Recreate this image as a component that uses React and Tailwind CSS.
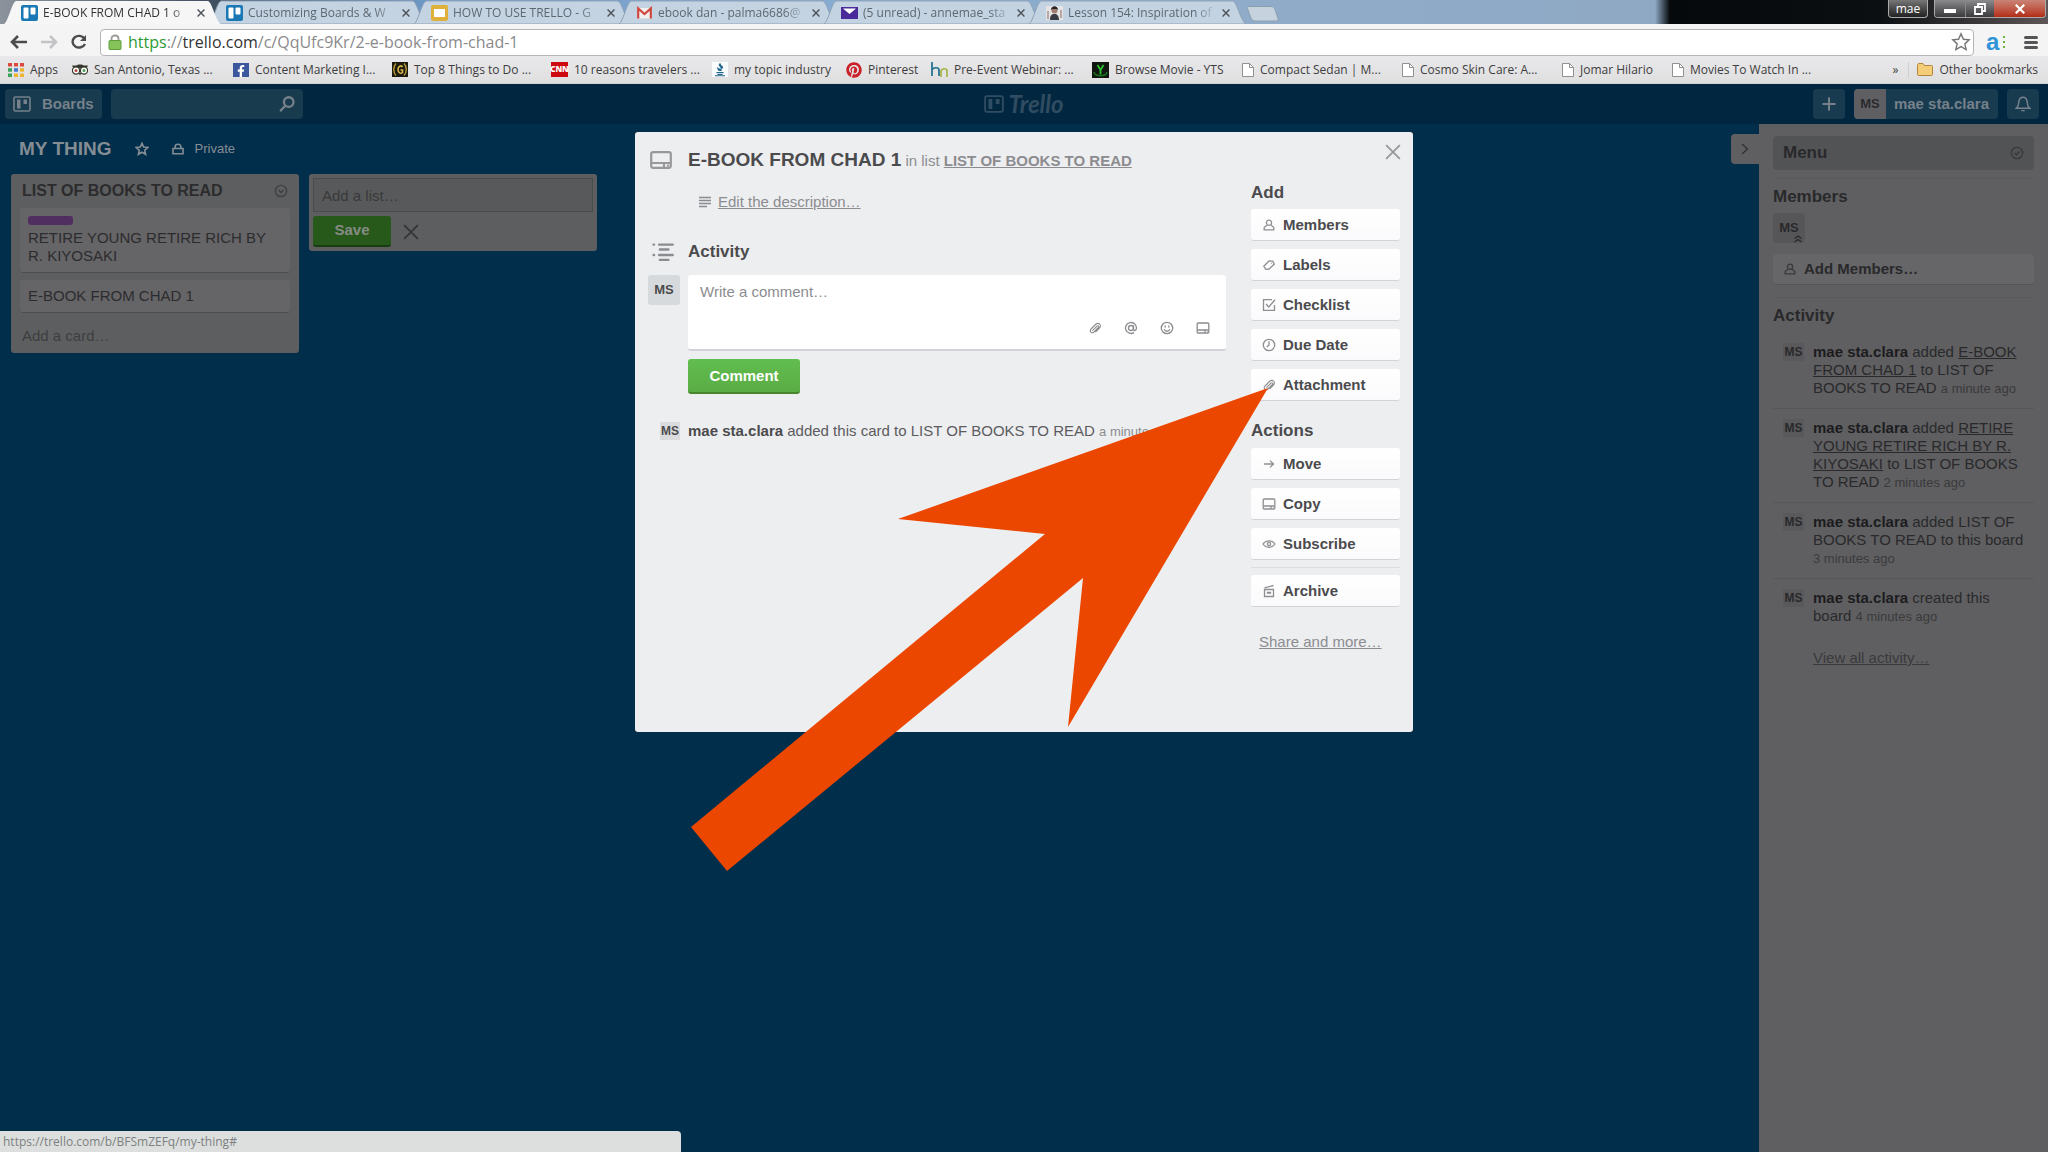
import { FaFacebookF, FaPinterest } from "react-icons/fa";

const tabs = [
  { title: "E-BOOK FROM CHAD 1 o", icon: "trello", active: true },
  { title: "Customizing Boards & W", icon: "trello" },
  { title: "HOW TO USE TRELLO - G", icon: "slides" },
  { title: "ebook dan - palma6686@", icon: "gmail" },
  { title: "(5 unread) - annemae_sta", icon: "yahoo" },
  { title: "Lesson 154: Inspiration of", icon: "photo" },
];

const bookmarks = [
  { title: "Apps", icon: "apps", width: "w-16" },
  { title: "San Antonio, Texas ...", icon: "owl", width: "w-[161px]" },
  { title: "Content Marketing I...", icon: "facebook", width: "w-[159px]" },
  { title: "Top 8 Things to Do ...", icon: "gold", width: "w-[159px]" },
  { title: "10 reasons travelers ...", icon: "cnn", width: "w-[161px]" },
  { title: "my topic industry", icon: "bbb", width: "w-[134px]" },
  { title: "Pinterest", icon: "pinterest", width: "w-[85px]" },
  { title: "Pre-Event Webinar: ...", icon: "hn", width: "w-[161px]" },
  { title: "Browse Movie - YTS", icon: "yts", width: "w-[150px]" },
  { title: "Compact Sedan | M...", icon: "page", width: "w-40" },
  { title: "Cosmo Skin Care: A...", icon: "page", width: "w-40" },
  { title: "Jomar Hilario", icon: "page", width: "w-[110px]" },
  { title: "Movies To Watch In ...", icon: "page", width: "w-40" },
];

const addButtons = [
  { label: "Members", icon: "member" },
  { label: "Labels", icon: "label" },
  { label: "Checklist", icon: "check" },
  { label: "Due Date", icon: "clock" },
  { label: "Attachment", icon: "clip" },
];

const actionButtons = [
  { label: "Move", icon: "move" },
  { label: "Copy", icon: "card" },
  { label: "Subscribe", icon: "eye" },
];

function Favicon({ name }) {
  switch (name) {
    case "trello":
      return (
        <svg viewBox="0 0 17 16" className="h-4 w-[17px] shrink-0">
          <rect width="17" height="16" rx="2" fill="#1a78b4" />
          <rect x="2.5" y="2.5" width="5" height="11" rx="1" fill="#fff" />
          <rect x="9.5" y="2.5" width="5" height="7" rx="1" fill="#fff" />
        </svg>
      );
    case "slides":
      return (
        <svg viewBox="0 0 17 16" className="h-4 w-[17px] shrink-0">
          <rect width="17" height="16" rx="2" fill="#dfb13a" />
          <rect x="3" y="4" width="11" height="8" fill="#fff" />
        </svg>
      );
    case "gmail":
      return (
        <svg viewBox="0 0 17 16" className="h-4 w-[17px] shrink-0">
          <path d="M2 3h13v10.500H2z" fill="#f1efef" />
          <path d="M2.200 13.500V3.500l6.300 5.500 6.300-5.500v10" fill="none" stroke="#d2473d" strokeWidth="2.200" />
        </svg>
      );
    case "yahoo":
      return (
        <svg viewBox="0 0 17 16" className="h-4 w-[17px] shrink-0">
          <path d="M0 2h17v12H0z" fill="#4a2a9b" />
          <path d="M2 3.500h13L8.500 9z" fill="#fff" />
        </svg>
      );
    case "photo":
      return (
        <svg viewBox="0 0 17 16" className="h-4 w-[17px] shrink-0">
          <path d="M0 1h17v14H0z" fill="#e4e4e6" />
          <path d="M1 6h2v8H1zM14 5h2v8h-2z" fill="#b9a7a4" />
          <path d="M4 15c0-4 1-5 3-6h3c2 1 3 3 3 6z" fill="#3a3a42" />
          <circle cx="8.500" cy="5.500" r="3" fill="#a07c70" />
          <path d="M5 5c0-5 7-5 7 0L10.500 4h-4z" fill="#272326" />
        </svg>
      );
    case "apps":
      return (
        <svg viewBox="0 0 16 14" className="h-[14px] w-4 shrink-0">
          <path d="M0 0h4v3.500H0zM6 0h4v3.500H6zM12 0h4v3.500h-4z" fill="#d94a3d" />
          <path d="M0 5.200h4v3.500H0z" fill="#3ba25b" />
          <path d="M6 5.200h4v3.500H6z" fill="#4678d0" />
          <path d="M12 5.200h4v3.500h-4z" fill="#ecb430" />
          <path d="M0 10.500h4V14H0z" fill="#3ba25b" />
          <path d="M6 10.500h4V14H6zM12 10.500h4V14h-4z" fill="#ecb430" />
        </svg>
      );
    case "owl":
      return (
        <svg viewBox="0 0 16 12" className="h-3 w-4 shrink-0">
          <path d="M0 1.500h4c2-1.500 6-1.500 8 0h4l-1.500 2.500H1.500z" fill="#35382c" />
          <circle cx="4" cy="6.500" r="3.600" fill="#fff" stroke="#35382c" strokeWidth="1.200" />
          <circle cx="12" cy="6.500" r="3.600" fill="#fff" stroke="#35382c" strokeWidth="1.200" />
          <circle cx="4" cy="6.500" r="1.500" fill="#b8463c" />
          <circle cx="12" cy="6.500" r="1.500" fill="#4b9a55" />
          <path d="M6.500 9h3L8 11.500z" fill="#35382c" />
        </svg>
      );
    case "facebook":
      return (
        <span className="flex h-[14px] w-4 shrink-0 items-end justify-end bg-[#3b579d] pr-0.5 text-white">
          <FaFacebookF size={12} />
        </span>
      );
    case "gold":
      return (
        <svg viewBox="0 0 16 15" className="h-[15px] w-4 shrink-0">
          <path d="M0 0h16v15H0z" fill="#1d1a10" />
          <path d="M4 1.500c-3 3-3 9 0 12M12 1.500c3 3 3 9 0 12" fill="none" stroke="#b99a3c" strokeWidth="1.400" />
          <path d="M10.500 5C9 3 6 4 6 7.500s3 4.500 4.500 3V8H8.500" fill="none" stroke="#d9b74c" strokeWidth="1.600" />
        </svg>
      );
    case "cnn":
      return (
        <span className="flex h-[15px] w-[17px] shrink-0 items-center justify-center bg-[#cc0a10] text-[8px] font-black text-white">
          CNN
        </span>
      );
    case "bbb":
      return (
        <svg viewBox="0 0 16 15" className="h-[15px] w-4 shrink-0">
          <path d="M0 0h16v15H0z" fill="#fbfcfd" />
          <path d="M8 1c-4 3 3 4 0 7 5-2 3-4 1-5 0-1 0-1-1-2zM5.500 5c-1 2 1 3 1 4h3C11 7 7 7 5.500 5z" fill="#22688f" />
          <path d="M4.500 10h7v1.200h-7zM5.500 12h5v1h-5zM3 13.300h10v1H3z" fill="#22688f" />
        </svg>
      );
    case "pinterest":
      return <FaPinterest size={16} className="shrink-0 text-[#cb2027]" />;
    case "hn":
      return (
        <svg viewBox="0 0 17 16" className="h-4 w-[17px] shrink-0" fill="none" strokeWidth="1.700">
          <path d="M1 0v14M1 8c1-3 7-3 7 0v6" stroke="#1f6f8f" />
          <path d="M10 15V9c1-3 6-3 6 0v6" stroke="#a4b545" />
        </svg>
      );
    case "yts":
      return (
        <svg viewBox="0 0 17 16" className="h-4 w-[17px] shrink-0">
          <path d="M0 0h17v16H0z" fill="#10160f" />
          <path d="M2 10c1 5 12 5 13 0" fill="none" stroke="#177018" strokeWidth="1.500" />
          <path d="M5.500 3l3 5v4.500M11.500 3l-3 5" fill="none" stroke="#2bc42e" strokeWidth="1.800" />
        </svg>
      );
    default:
      return (
        <svg viewBox="0 0 12 14" className="h-[14px] w-3 shrink-0">
          <path d="M.5.5h7l4 4v9H.5z" fill="#fff" stroke="#909090" />
          <path d="M7.500.5v4h4" fill="none" stroke="#909090" />
        </svg>
      );
  }
}

function Icon({ name, className }) {
  const shapes = {
    member: (
      <>
        <circle cx="7" cy="4.800" r="2.600" />
        <path d="M4.800 7.200 2.200 9.500v2.300h9.600V9.500L9.200 7.200" />
      </>
    ),
    label: (
      <>
        <path d="M1.800 8.200 7 3l3.800.2L12.300 6l-5.200 5-3.300.3z" />
        <path d="M9.300 5.300h.8" />
      </>
    ),
    check: (
      <>
        <path d="M12.500 7v5.300h-11V1.700h8.500" />
        <path d="m4 6 2.700 3L13 1.800" />
      </>
    ),
    clock: (
      <>
        <circle cx="7" cy="7" r="5.700" />
        <path d="M7 3.200V7L4.800 9" />
      </>
    ),
    clip: (
      <path
        d="m4.400 9.600 4.600-4.400c1.200-1.100 2.400.2 1.400 1.300L6 11c-2.200 2-5-.8-3-3l4.500-4.500c3-2.800 6.600.8 4 3.500l-4 4"
        strokeWidth="1.100"
      />
    ),
    card: (
      <>
        <rect x="1.200" y="2" width="11.600" height="10" rx="1" />
        <path d="M1.500 9h11M9 9v2.500M11 10.700h.5" />
      </>
    ),
    move: <path d="M2 7h9.500M8 3.600 11.500 7 8 10.400" />,
    eye: (
      <>
        <path d="M1 7c2.800-4.300 9.200-4.300 12 0-2.800 4.300-9.200 4.300-12 0z" />
        <circle cx="7" cy="7" r="1.600" />
      </>
    ),
    archive: <path d="M2.500 5.500h9v7h-9zM2.500 3.800l9-2.300M5.500 8.300h3v.8h-3z" />,
    at: (
      <>
        <circle cx="7" cy="7" r="2.500" />
        <path d="M9.500 4.500v4c.5 1.800 3 1 3-1.500A5.500 5.500 0 1 0 10 11.600" />
      </>
    ),
    smile: (
      <>
        <circle cx="7" cy="7" r="5.700" />
        <path d="M5.200 4.500v2M8.800 4.500v2M4.200 8.300c1 2.600 4.600 2.600 5.600 0" />
      </>
    ),
    star: <path d="m7 1.300 1.700 3.800 4 .4-3 2.800.9 4L7 10.200l-3.600 2.100.9-4-3-2.800 4-.4z" />,
    lock: (
      <>
        <path d="M2 6.500h10v5.300H2z" />
        <path d="M4.200 6.300V4.500c0-3 5.600-3 5.600 0v1.800" />
      </>
    ),
    circleDown: (
      <>
        <circle cx="7" cy="7" r="5.700" />
        <path d="m4.500 6 2.500 2.500L9.500 6" />
      </>
    ),
    circleCheck: (
      <>
        <circle cx="7" cy="7" r="5.700" />
        <path d="m4.500 6.800 2 2 3.200-3.300" />
      </>
    ),
    close: <path d="m1 1 12 12M13 1 1 13" />,
    search: (
      <>
        <circle cx="8.500" cy="5.300" r="4.200" />
        <path d="M5.500 8.500 1 13.200" strokeWidth="2" />
      </>
    ),
    plus: <path d="M7 .5v13M.5 7h13" />,
    bell: (
      <path d="M1 10.800c2.300-1.500 2-3.200 2.300-5.600C3.800 2 5.300 1 7 1s3.200 1 3.700 4.200c.3 2.400 0 4.100 2.300 5.600zM5.500 12.800h3" />
    ),
    right: <path d="m4 2 5.500 5L4 12" />,
    lines: <path d="M1 2.500h12M1 5.500h12M1 8.500h12M1 11.500h8" />,
    activity: (
      <path
        d="M1 2.300h.3M4.500 2.300h8.700M5 5.400h5.500M1 8.900h.3M4.500 8.900h8.700M5 12h5.500"
        strokeWidth="1.500"
        strokeLinecap="round"
      />
    ),
  };
  return (
    <svg viewBox="0 0 14 14" fill="none" stroke="currentColor" strokeWidth="1.300" className={className} aria-hidden="true">
      {shapes[name]}
    </svg>
  );
}

function BoardsMark({ className }) {
  return (
    <svg viewBox="0 0 18 16" className={className} fill="none" stroke="currentColor" strokeWidth="1.600">
      <rect x="1" y="1" width="16" height="14" rx="1.500" />
      <path d="M4 3.500h3.500v9H4zM10.500 3.500H14V8h-3.500z" fill="currentColor" stroke="none" />
    </svg>
  );
}

function Tab({ title, icon, active }) {
  return (
    <div className={"relative flex h-6 w-[205px] items-center gap-[5px] pt-0.5 pl-[17px] " + (active ? "z-10" : "")}>
      <svg viewBox="0 0 217 24" preserveAspectRatio="none" className="absolute top-0 left-0 h-6 w-[217px]">
        <path
          d="M0 24C4 22 8 2 12 1h192c4 1 8 21 13 23z"
          fill={active ? "#f6f6f7" : "#c3d3e2"}
          stroke={active ? "none" : "#8fa3b6"}
        />
      </svg>
      <span className="relative">
        <Favicon name={icon} />
      </span>
      <span
        className={
          "relative w-[149px] text-xs whitespace-nowrap [mask-image:linear-gradient(to_right,black_85%,transparent)] " +
          (active ? "text-[#333]" : "text-[#5d6771]")
        }
      >
        {title}
      </span>
      <button type="button" aria-label="Close tab" className="relative text-[#4d5258]">
        <Icon name="close" className="size-2 stroke-[2.5]" />
      </button>
    </div>
  );
}

function Browser() {
  return (
    <header className="font-['Open_Sans',sans-serif]">
      <div className="flex h-6 items-stretch bg-[linear-gradient(to_right,#8b929b_0px,#3c4d5e_225px,#6f9ac8_430px,#86abd2_800px,#8facca_1200px,#8fa9c4_1655px,#05090b_1670px,#0b0f11_1880px,#5d5557_2048px)] pl-1">
        {tabs.map((tab) => (
          <Tab key={tab.title} {...tab} />
        ))}
        <button type="button" aria-label="New tab" className="mt-1.5 ml-3 h-4">
          <svg viewBox="0 0 34 16" className="h-4 w-[34px]">
            <path d="M3 .5h22c2 0 3 1 4 3l3 9c.5 2-.5 2.500-2 2.500H9c-2 0-3-1-4-3L1.500 2.500C1 1 1.500.5 3 .5z" fill="#c6d3de" stroke="#8da0b3" />
          </svg>
        </button>
        <div className="ml-auto flex gap-1.5 pr-0.5 text-white">
          <button type="button" className="h-[18px] w-10 rounded-b border border-t-0 border-[#aaa] bg-gradient-to-b from-[#777] to-[#222] text-xs leading-4">
            mae
          </button>
          <div className="flex h-[18px] overflow-hidden rounded-b border border-t-0 border-[#aaa]">
            <button type="button" aria-label="Minimize" className="flex w-[31px] items-center justify-center border-r border-[#888] bg-gradient-to-b from-[#8b8b8d] to-[#3b3b3d]">
              <span className="mt-1 h-1 w-3 bg-white" />
            </button>
            <button type="button" aria-label="Restore" className="flex w-7 items-center justify-center bg-gradient-to-b from-[#8b8b8d] to-[#3b3b3d]">
              <svg viewBox="0 0 12 12" className="size-3" fill="none" stroke="#fff" strokeWidth="1.800">
                <path d="M4 3V1h7v7H9M1 4h7v7H1z" />
              </svg>
            </button>
            <button type="button" aria-label="Close" className="flex w-[51px] items-center justify-center bg-gradient-to-b from-[#c98376] to-[#b32a13]">
              <Icon name="close" className="size-2.5 stroke-[3]" />
            </button>
          </div>
        </div>
      </div>

      <div className="flex h-8 items-center bg-[#f4f4f5] pt-1 pr-2.5 pl-2.5">
        <button type="button" aria-label="Back" className="text-[#4c4c4e]">
          <svg viewBox="0 0 18 14" className="h-[14px] w-[18px]" fill="none" stroke="currentColor" strokeWidth="2.600">
            <path d="M17 7H2M8 1 2 7l6 6" />
          </svg>
        </button>
        <button type="button" aria-label="Forward" className="ml-3 text-[#c4c4c6]">
          <svg viewBox="0 0 18 14" className="h-[14px] w-[18px]" fill="none" stroke="currentColor" strokeWidth="2.600">
            <path d="M1 7h15M10 1l6 6-6 6" />
          </svg>
        </button>
        <button type="button" aria-label="Reload" className="ml-3 text-[#4c4c4e]">
          <svg viewBox="0 0 18 16" className="h-4 w-[18px]" fill="none" stroke="currentColor" strokeWidth="2.400">
            <path d="M14.500 4.500A6.500 5.800 0 1 0 15 10" />
            <path d="M16 1v6h-6z" fill="currentColor" stroke="none" />
          </svg>
        </button>
        <div className="ml-3 flex h-[27px] flex-1 items-center rounded-sm border border-[#b5b5b8] bg-white pr-0.5 pl-[7px]">
          <svg viewBox="0 0 14 16" className="h-4 w-[14px]">
            <path d="M3.500 7V4.500c0-4 7-4 7 0V7" fill="none" stroke="#9a9d98" strokeWidth="1.800" />
            <rect x="1" y="6.500" width="12" height="9" rx="1" fill="#86c35a" stroke="#5f9d3c" />
          </svg>
          <p className="ml-1.5 flex-1 text-base leading-6 text-[#8a8a8c]">
            <span className="text-[#2c9a32]">https</span>://<span className="text-[#333]">trello.com</span>
            /c/QqUfc9Kr/2-e-book-from-chad-1
          </p>
          <button type="button" aria-label="Bookmark this page" className="text-[#77777a]">
            <Icon name="star" className="size-5 stroke-1" />
          </button>
        </div>
        <div className="ml-3 flex w-5 items-center gap-1">
          <span className="font-['Liberation_Sans',sans-serif] text-2xl leading-6 font-bold text-[#2f93d8]">a</span>
          <svg viewBox="0 0 2 14" className="h-[14px] w-0.5 shrink-0 fill-[#70b33c]">
            <path d="M0 1h2v2H0zM0 6h2v2H0zM0 11h2v2H0z" />
          </svg>
        </div>
        <button type="button" aria-label="Browser menu" className="ml-[18px] flex flex-col gap-0.5">
          <span className="h-[3px] w-[14px] rounded-sm bg-[#555557]" />
          <span className="h-[3px] w-[14px] rounded-sm bg-[#555557]" />
          <span className="h-[3px] w-[14px] rounded-sm bg-[#555557]" />
        </button>
      </div>

      <nav className="flex h-7 items-center overflow-hidden border-b border-[#d0d2d3] bg-gradient-to-b from-[#e9e8ea] to-[#dfdfe0] pr-2.5 pl-2 text-xs text-[#3d3d40]">
        {bookmarks.map(({ title, icon, width }) => (
          <a key={title} href="#" className={"flex shrink-0 items-center gap-1.5 whitespace-nowrap " + width}>
            <Favicon name={icon} />
            {title}
          </a>
        ))}
        <button type="button" aria-label="More bookmarks" className="ml-auto">»</button>
        <a href="#" className="ml-2.5 flex items-center gap-1.5 border-l border-[#cfcfd1] pl-2 whitespace-nowrap">
          <svg viewBox="0 0 16 13" className="h-[13px] w-4">
            <path d="M.5 2.500c0-1 .5-2 1.500-2h4l1.500 2h7c.7 0 1 .3 1 1v8c0 .7-.3 1-1 1h-13c-.7 0-1-.3-1-1z" fill="#f3cd78" stroke="#b28440" />
          </svg>
          Other bookmarks
        </a>
      </nav>
    </header>
  );
}

function TrelloBar() {
  return (
    <div className="relative flex h-10 items-center bg-[#012740] px-[5px] text-[15px] font-bold text-[#76818b]">
      <button type="button" className="flex h-[30px] w-[97px] items-center gap-[11px] rounded bg-[#183b50] pl-2">
        <BoardsMark className="h-4 w-[18px]" />
        Boards
      </button>
      <label className="ml-[9px] flex h-[30px] w-48 items-center rounded bg-[#183b4d] pr-2">
        <input aria-label="Search" className="min-w-0 flex-1 bg-transparent px-2 outline-none" />
        <Icon name="search" className="size-4 stroke-2" />
      </label>
      <div className="absolute inset-x-0 flex items-center justify-center gap-1 text-[#304c61]">
        <BoardsMark className="h-[18px] w-5" />
        <span className="font-['Lato',sans-serif] text-2xl leading-6 font-bold italic">Trello</span>
      </div>
      <button type="button" aria-label="Create" className="relative ml-auto flex h-[30px] w-8 items-center justify-center rounded bg-[#183b50]">
        <Icon name="plus" className="size-[14px] stroke-2" />
      </button>
      <button type="button" className="relative ml-[9px] flex h-[30px] items-center overflow-hidden rounded bg-[#183b50] pr-[9px]">
        <span className="mr-2 flex h-full w-8 items-center justify-center bg-[#5f5f63] text-[13px] text-[#2b2b2e]">MS</span>
        mae sta.clara
      </button>
      <button type="button" aria-label="Notifications" className="relative mr-1 ml-[9px] flex h-[30px] w-8 items-center justify-center rounded bg-[#183b50]">
        <Icon name="bell" className="size-4" />
      </button>
    </div>
  );
}

function Board() {
  return (
    <main className="flex-1 px-[11px]">
      <div className="flex h-[50px] items-center pl-2 text-[#858d94]">
        <h1 className="text-[19px] font-bold">MY THING</h1>
        <button type="button" aria-label="Star board" className="ml-[23px]">
          <Icon name="star" className="size-[14px] stroke-[1.6]" />
        </button>
        <button type="button" className="ml-[22px] flex items-center gap-2.5 text-[13px]">
          <Icon name="lock" className="size-[14px] stroke-[1.6]" />
          Private
        </button>
      </div>
      <div className="flex items-start gap-2.5">
        <section className="w-72 rounded-[3px] bg-[#5d5e5f] px-[9px] pb-2 text-[15px] leading-[18px] text-[#2c2c2e]">
          <div className="flex h-[34px] items-center justify-between px-0.5">
            <h2 className="text-base font-bold">LIST OF BOOKS TO READ</h2>
            <button type="button" aria-label="List menu" className="text-[#3f3f41]">
              <Icon name="circleDown" className="size-[14px]" />
            </button>
          </div>
          <article className="rounded-[3px] border-b border-[#4d4e4f] bg-[#656467] px-2 pt-2 pb-[7px]">
            <div className="mb-1 h-[9px] w-[45px] rounded-[3px] bg-[#502e60]" />
            <p>RETIRE YOUNG RETIRE RICH BY R. KIYOSAKI</p>
          </article>
          <article className="mt-[7px] rounded-[3px] border-b border-[#4d4e4f] bg-[#656467] px-2 py-[7px]">E-BOOK FROM CHAD 1</article>
          <a href="#" className="mt-[14px] block pl-0.5 text-[#3d3e3f]">Add a card…</a>
        </section>
        <form className="w-72 rounded-[3px] bg-[#5d5e5f] p-1">
          <input
            aria-label="List name"
            placeholder="Add a list…"
            className="block h-[34px] w-full border border-[#494b4c] bg-[#58595a] px-2 text-[15px] placeholder:text-[#38393a]"
          />
          <div className="mt-1 flex items-center gap-3">
            <button type="button" className="h-[31px] w-[78px] rounded-[3px] border-b-2 border-[#183d12] bg-[#26591a] text-[15px] font-bold text-[#868b86]">
              Save
            </button>
            <button type="button" aria-label="Cancel" className="text-[#353536]">
              <Icon name="close" className="size-4 stroke-[1.6]" />
            </button>
          </div>
        </form>
      </div>
    </main>
  );
}

function MenuItem({ children, time, last }) {
  return (
    <li className={"flex items-start pt-2.5 pr-2 pl-2.5 " + (last ? "" : "border-b border-[#575759] pb-[11px]")}>
      <span className="mr-[9px] flex h-[18px] w-[21px] shrink-0 items-center justify-center bg-[#59595b] text-xs font-bold">MS</span>
      <p className="flex-1">
        <b className="text-[#1c1c1e]">mae sta.clara</b> {children}{" "}
        <span className="text-[13px] leading-none text-[#3a3a3c]">{time}</span>
      </p>
    </li>
  );
}

function Menu() {
  return (
    <aside className="relative w-[289px] bg-[#5f5f61] pt-3 pr-[14px] pl-[14px] text-[15px] leading-[18px] text-[#29292b]">
      <button type="button" aria-label="Hide menu" className="absolute top-2.5 -left-7 flex h-[30px] w-7 items-center justify-center rounded-l bg-[#5f5f61] text-[#303032]">
        <Icon name="right" className="size-[14px]" />
      </button>
      <div className="flex h-[34px] items-center justify-between rounded bg-[#525355] px-2.5">
        <h2 className="text-[17px] font-bold">Menu</h2>
        <Icon name="circleCheck" className="size-[14px] text-[#39393b]" />
      </div>
      <h3 className="mt-2 border-t border-[#5a5a5c] pt-[9px] text-[17px] font-bold">Members</h3>
      <div className="relative mt-[7px] flex h-[30px] w-8 items-center justify-center rounded bg-[#565658] text-[13px] font-bold">
        MS
        <svg viewBox="0 0 10 8" className="absolute right-0.5 bottom-0 h-2 w-2.5" fill="none" stroke="currentColor" strokeWidth="1.300">
          <path d="m1.500 3.500L5 1l3.500 2.500M1.500 7 5 4.500 8.500 7" />
        </svg>
      </div>
      <button type="button" className="mt-[11px] flex h-[31px] w-full items-center gap-[7px] rounded border-b border-[#555557] bg-[#666668] pl-[10px] font-bold">
        <Icon name="member" className="size-[14px] text-[#39393b]" />
        Add Members…
      </button>
      <h3 className="mt-3 border-t border-[#5a5a5c] pt-[9px] text-[17px] font-bold">Activity</h3>
      <ul className="mt-2">
        <MenuItem time="a minute ago">
          added <a href="#" className="underline">E-BOOK FROM CHAD 1</a> to LIST OF BOOKS TO READ
        </MenuItem>
        <MenuItem time="2 minutes ago">
          added <a href="#" className="underline">RETIRE YOUNG RETIRE RICH BY R. KIYOSAKI</a> to LIST OF BOOKS TO READ
        </MenuItem>
        <MenuItem time="3 minutes ago">added LIST OF BOOKS TO READ to this board</MenuItem>
        <MenuItem time="4 minutes ago" last>created this board</MenuItem>
      </ul>
      <a href="#" className="mt-6 ml-10 inline-block text-[#3a3a3c] underline">View all activity…</a>
    </aside>
  );
}

function SideButton({ label, icon }) {
  return (
    <button type="button" className="flex h-8 w-full items-center gap-[7px] rounded-[3px] border-b border-[#d2d3d6] bg-gradient-to-b from-white to-[#fafafc] pl-[11px] text-[15px] font-bold text-[#4b4b4d]">
      <Icon name={icon} className="size-[14px] text-[#8f8f92]" />
      {label}
    </button>
  );
}

function CardModal() {
  return (
    <div role="dialog" aria-label="E-BOOK FROM CHAD 1" className="absolute top-2 left-1/2 flex w-[778px] -translate-x-1/2 gap-[25px] rounded-[3px] bg-[#edeef0] pt-4 pr-[13px] pb-[81px] pl-[13px] text-[15px] leading-[18px] text-[#8c8c90]">
      <div className="flex-1">
        <div className="flex h-6 items-center">
          <svg viewBox="0 0 22 18" className="mr-4 ml-0.5 h-[18px] w-[22px]" fill="none" stroke="#98989b" strokeWidth="2.200">
            <rect x="1.200" y="1.200" width="19.600" height="15.600" rx="2" />
            <path d="M1 12h20M14 12v4M17 14.500h2" />
          </svg>
          <p>
            <span className="text-[19px] font-bold text-[#4b4b4d]">E-BOOK FROM CHAD 1</span> in list{" "}
            <a href="#" className="font-bold underline">LIST OF BOOKS TO READ</a>
          </p>
        </div>
        <a href="#" className="mt-[21px] ml-[50px] flex items-center gap-1.5">
          <Icon name="lines" className="size-[14px]" />
          <span className="underline">Edit the description…</span>
        </a>
        <div className="mt-[31px] flex h-5 items-center">
          <Icon name="activity" className="mr-[14px] ml-1 size-[22px]" />
          <h3 className="text-[17px] font-bold text-[#4b4b4d]">Activity</h3>
        </div>
        <div className="mt-[13px] flex items-start gap-2">
          <span className="flex h-[30px] w-8 items-center justify-center rounded-[3px] bg-[#d7dadc] text-[13px] font-bold text-[#4b4b4d]">MS</span>
          <div className="flex-1">
            <div className="rounded-[3px] border-b-2 border-[#d2d3d6] bg-white">
              <textarea aria-label="Write a comment" placeholder="Write a comment…" className="block h-11 w-full resize-none px-3 pt-2 placeholder:text-[#8c8c90]" />
              <div className="flex h-[30px] justify-end gap-[22px] pt-0.5 pr-4">
                <Icon name="clip" className="size-[14px]" />
                <Icon name="at" className="size-[14px]" />
                <Icon name="smile" className="size-[14px]" />
                <Icon name="card" className="size-[14px]" />
              </div>
            </div>
            <button type="button" className="mt-2 h-[35px] w-28 rounded-[3px] border-b-2 border-[#49852f] bg-gradient-to-b from-[#61bd4f] to-[#5aac44] font-bold text-white">
              Comment
            </button>
          </div>
        </div>
        <div className="mt-7 flex items-center">
          <span className="mr-2 ml-3 flex h-[18px] w-5 items-center justify-center bg-[#d9dbdd] text-xs font-bold text-[#4b4b4d]">MS</span>
          <p className="text-[#5c5c5f]">
            <b className="text-[#4b4b4d]">mae sta.clara</b> added this card to LIST OF BOOKS TO READ{" "}
            <span className="text-[13px] leading-none text-[#8c8c90]">a minute ago</span>
          </p>
        </div>
      </div>

      <div className="w-[149px] pt-9">
        <button type="button" aria-label="Close dialog" className="absolute top-3 right-3 text-[#98989b]">
          <Icon name="close" className="size-4 stroke-[1.6]" />
        </button>
        <h3 className="text-[17px] font-bold text-[#4b4b4d]">Add</h3>
        <div className="mt-[7px] flex flex-col gap-2">
          {addButtons.map((button) => (
            <SideButton key={button.label} {...button} />
          ))}
        </div>
        <h3 className="mt-[21px] text-[17px] font-bold text-[#4b4b4d]">Actions</h3>
        <div className="mt-2 flex flex-col gap-2">
          {actionButtons.map((button) => (
            <SideButton key={button.label} {...button} />
          ))}
        </div>
        <hr className="my-[7px] border-[#dcdde0]" />
        <SideButton label="Archive" icon="archive" />
        <a href="#" className="mt-[26px] ml-2 block underline">Share and more…</a>
      </div>

      {/* pointer to the Attachment button */}
      <svg viewBox="0 0 778 760" className="pointer-events-none absolute top-0 left-0 h-[760px] w-[778px]">
        <path d="M633 256 263 387 410 402 56 695 92 739 448 446 433 595z" fill="#ec4700" />
      </svg>
    </div>
  );
}

export default function App() {
  return (
    <div className="flex min-h-screen flex-col bg-[#012e4b] font-['Liberation_Sans',Arial,sans-serif]">
      <Browser />
      <TrelloBar />
      <div className="relative flex flex-1">
        <Board />
        <Menu />
        <CardModal />
      </div>
      <div className="fixed bottom-0 left-0 h-[21px] w-[681px] max-w-full rounded-tr bg-[#dcdfde] px-[3px] font-['Open_Sans',sans-serif] text-xs leading-[22px] text-[#7d7f80]">
        https://trello.com/b/BFSmZEFq/my-thing#
      </div>
    </div>
  );
}
